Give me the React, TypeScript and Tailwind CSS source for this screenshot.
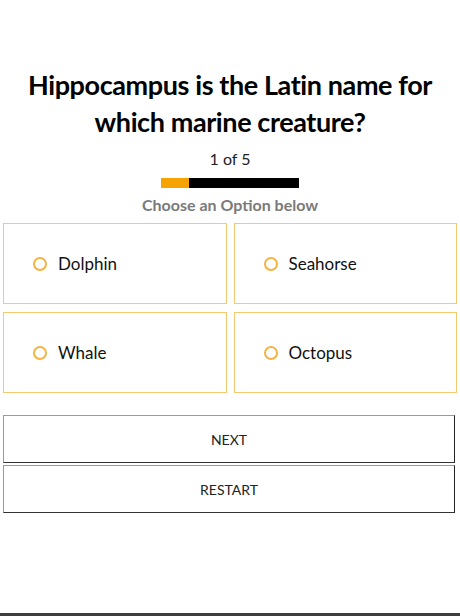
const options = ["Dolphin", "Seahorse", "Whale", "Octopus"]

const App = () => {
  const current = 1
  const total = 5

  return (
    <div className="min-h-[616px] flex flex-col bg-white font-['Lato',sans-serif] text-black">
      <div className="flex-1 flex flex-col items-center pt-[66px]">
        <h1 className="text-[27px] leading-[37px] font-bold tracking-[-0.4px] text-center px-[16px]">
          Hippocampus is the Latin name for which marine creature?
        </h1>
        <p className="mt-[9px] text-[16px] leading-5 text-[#222]">
          {current} of {total}
        </p>
        <div className="mt-[9px] w-[138px] h-[10px] bg-black flex">
          <div className="h-full bg-[#f5a300]" style={{ width: `${(current / total) * 100}%` }} />
        </div>
        <p className="mt-[7px] text-[16px] leading-5 font-bold text-[#7a7a7a]">Choose an Option below</p>

        <div className="mt-[8px] w-full px-[3px] grid grid-cols-2 gap-x-[7px] gap-y-[8px]">
          {options.map((opt) => (
            <div
              key={opt}
              className="h-[81px] border border-[#f6c971] flex items-center pl-[29px] gap-[11px]"
            >
              <span className="w-[14px] h-[14px] rounded-full border-2 border-[#f5b342]" />
              <span className="text-[17px] text-[#111]">{opt}</span>
            </div>
          ))}
        </div>

        <div className="mt-[22px] w-full px-[3px] flex flex-col gap-[2px]">
          <button className="h-[48px] w-[452px] border border-[#9a9a9a] border-b-[#333] border-r-[#222] text-[14px] text-[#222] bg-white">
            NEXT
          </button>
          <button className="h-[48px] w-[452px] border border-[#9a9a9a] border-b-[#333] border-r-[#222] text-[14px] text-[#222] bg-white">
            RESTART
          </button>
        </div>
      </div>
      <div className="h-[3px] bg-[#3d3d3d]" />
    </div>
  )
}

export default App
